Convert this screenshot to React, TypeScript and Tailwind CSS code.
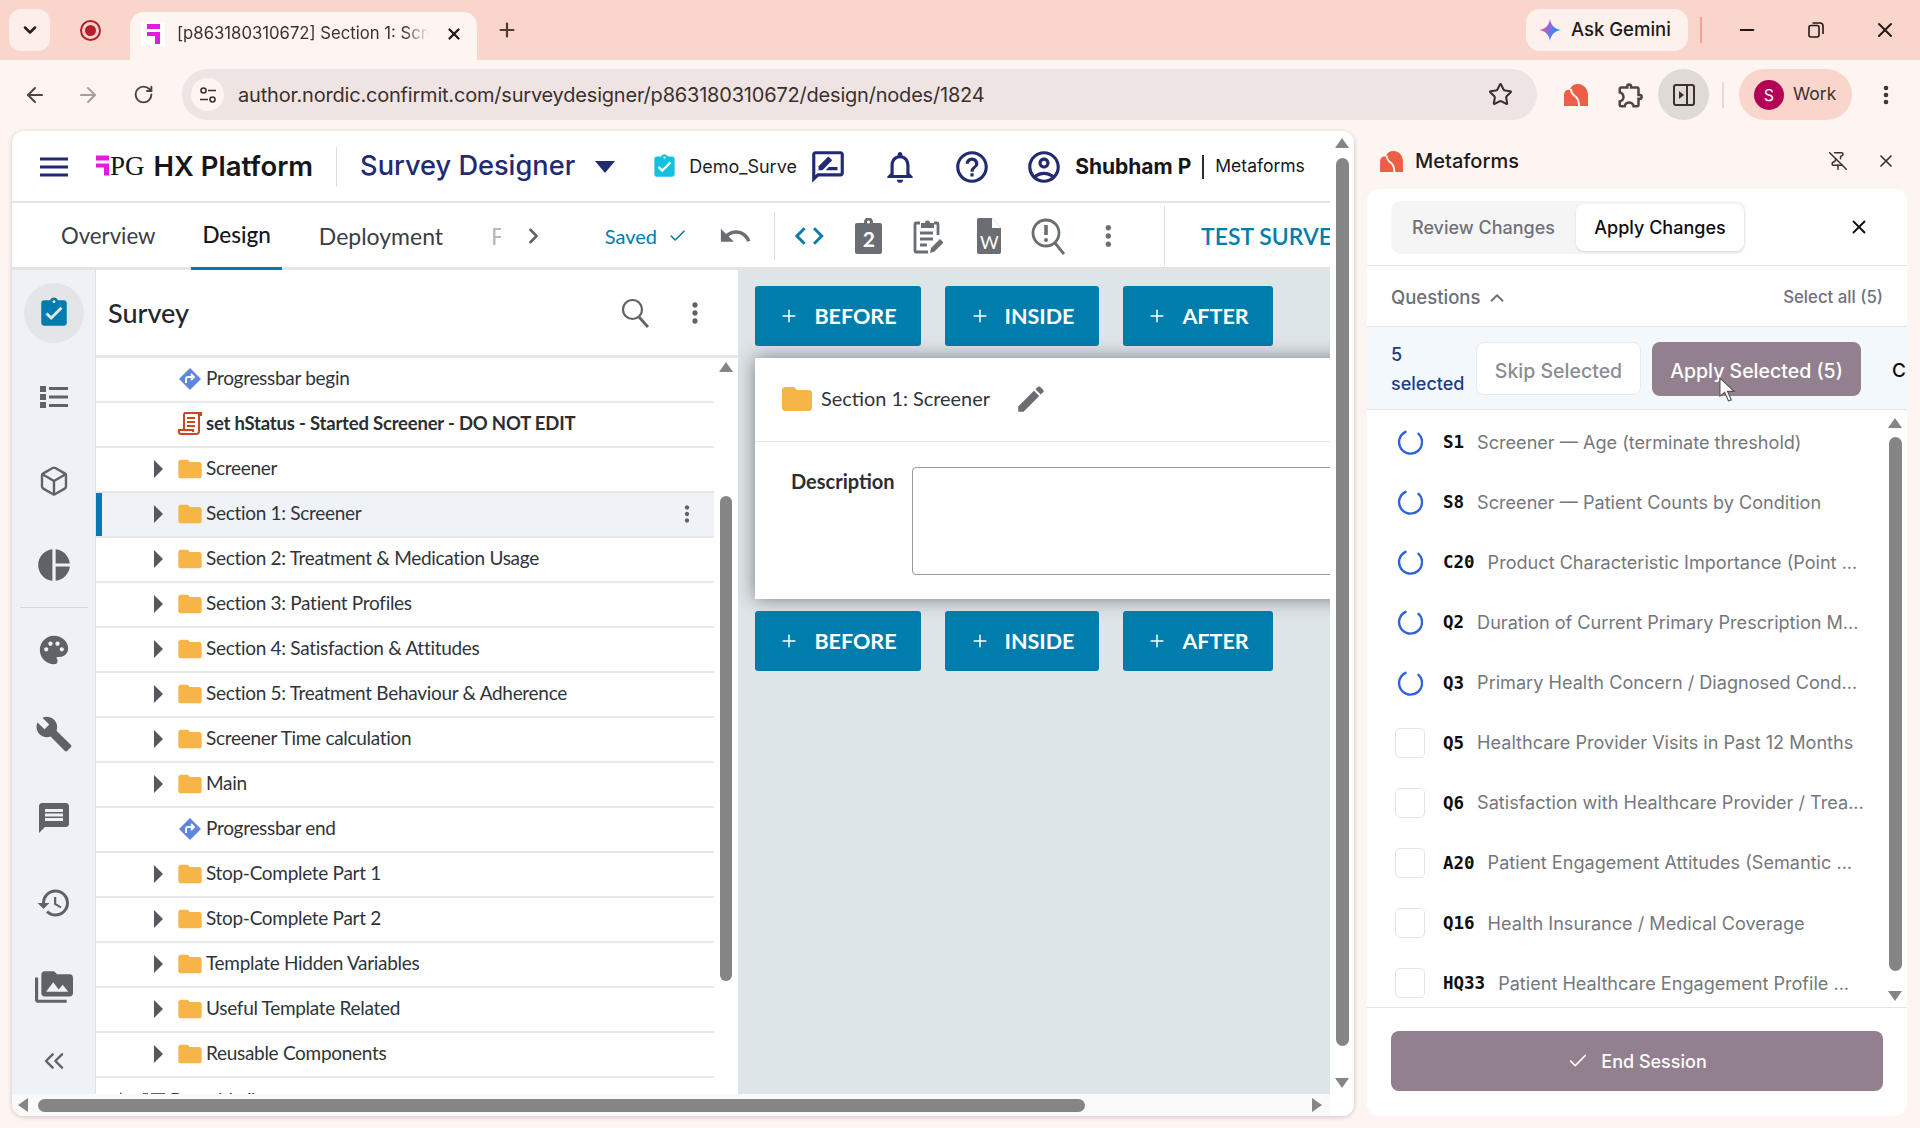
import React from "react";
import { ChevronDown, X, Plus, ArrowLeft, ArrowRight, RotateCw, Star, EllipsisVertical, ChevronUp, Check, ChevronRight, Minus, PinOff, Box, ChevronsLeft } from "lucide-react";
import { MdAssignmentTurnedIn, MdPieChart, MdPalette, MdBuild, MdMessage, MdHistory, MdPermMedia, MdFolder, MdEdit, MdMoreVert, MdUndo, MdCode, MdOutlineNotifications, MdHelpOutline, MdOutlineAccountCircle, MdOutlineRateReview, MdOutlineExtension } from "react-icons/md";

const sans = "font-['Lato','Liberation_Sans',sans-serif]";
const ui = "font-['Inter','Liberation_Sans',sans-serif]";

function PgMark({ className }: { className: string }) {
  return (
    <svg viewBox="0 0 13 20" className={className}>
      <rect x="0" y="0" width="13" height="5" fill="#e619df" />
      <path d="M0 8h13v12H8v-8H0z" fill="#e619df" />
    </svg>
  );
}

function MetaLogo({ className }: { className: string }) {
  return (
    <svg viewBox="0 0 24 22" className={className}>
      <path d="M0 22V11C0 7 3 5 6 6c1-4 4-6 8-6 6 0 10 5 10 11v11H0z" fill="#ee5d45" />
      <path d="M7 5c0 4 2 6 5 8 2 2 3 5 3 9" fill="none" stroke="#fdf5f2" strokeWidth="2" />
    </svg>
  );
}

function GeminiStar() {
  return (
    <svg viewBox="0 0 24 24" className="w-[22px] h-[24px]">
      <defs>
        <linearGradient id="gem" x1="0" y1="0.2" x2="1" y2="0.6">
          <stop offset="0" stopColor="#e8753c" />
          <stop offset="0.4" stopColor="#a55fd6" />
          <stop offset="0.75" stopColor="#2f8cf0" />
          <stop offset="1" stopColor="#1fb7a0" />
        </linearGradient>
      </defs>
      <path d="M12 0c1 7 5 11 12 12-7 1-11 5-12 12-1-7-5-11-12-12 7-1 11-5 12-12z" fill="url(#gem)" />
    </svg>
  );
}

function Tri({ dir, className }: { dir: "up" | "down" | "left" | "right"; className?: string }) {
  const d = { up: "M0 10L7 0l7 10z", down: "M0 0l7 10 7-10z", left: "M10 0L0 7l10 7z", right: "M0 0l10 7-10 7z" }[dir];
  const vb = dir === "up" || dir === "down" ? "0 0 14 10" : "0 0 10 14";
  const size = dir === "up" || dir === "down" ? "w-[14px] h-[10px]" : "w-[10px] h-[14px]";
  return (
    <svg viewBox={vb} className={`${size} ${className ?? ""}`}>
      <path d={d} fill="#858585" />
    </svg>
  );
}

function Diamond() {
  return (
    <svg viewBox="0 0 24 24" className="w-[24px] h-[24px] shrink-0">
      <path d="M12 1l11 11-11 11L1 12z" fill="#5d86e0" />
      <path d="M8 16v-4a2 2 0 012-2h5M13 7l3 3-3 3" fill="none" stroke="#fff" strokeWidth="2" />
    </svg>
  );
}

function ScriptIcon() {
  return (
    <svg viewBox="0 0 24 26" className="w-[24px] h-[26px] shrink-0">
      <path d="M6 2h15v18a3 3 0 01-3 3H3a2 2 0 01-2-2v-2h14v2M6 19V4a2 2 0 012-2M21 2h2v3" fill="none" stroke="#c9481f" strokeWidth="2" />
      <path d="M9 7h8M9 11h8M9 15h8" stroke="#c9481f" strokeWidth="2" />
    </svg>
  );
}

function ListIcon() {
  return (
    <svg viewBox="0 0 28 24" className="w-[28px] h-[24px]">
      <path d="M0 1h6v6H0zM0 9h6v6H0zM0 17h6v6H0z" fill="currentColor" />
      <path d="M9 2h19v3H9zM9 10.500h19v3H9zM9 19h19v3H9z" fill="currentColor" />
    </svg>
  );
}

function ClipNum() {
  return (
    <div className="relative w-[27px] h-[36px] flex items-center justify-center">
      <svg viewBox="0 0 27 36" className="w-[27px] h-[36px]">
        <path d="M2 5h7V4a4.500 4.500 0 019 0v1h7a2 2 0 012 2v27a2 2 0 01-2 2H2a2 2 0 01-2-2V7a2 2 0 012-2z" fill="#6a6e72" />
        <circle cx="13.500" cy="4" r="1.500" fill="#fff" />
      </svg>
      <span className={`absolute top-[8px] text-white text-[21px] font-bold leading-[26px] ${sans}`}>2</span>
    </div>
  );
}

function ReviewIcon() {
  return (
    <svg viewBox="0 0 30 36" className="w-[30px] h-[36px]">
      <path d="M7 5H3a1 1 0 00-1 1v27a1 1 0 001 1h12M21 5h3a1 1 0 011 1v11" fill="none" stroke="#6a6e72" strokeWidth="2.8" />
      <path d="M8 5h4a2.500 2.500 0 015 0h4v5H8z" fill="#6a6e72" />
      <path d="M7 15h13M7 21h13M7 27h7" stroke="#6a6e72" strokeWidth="2.8" />
      <path d="M17 35l1-5 9-9 3.500 3.500-9 9z" fill="#6a6e72" />
    </svg>
  );
}

function WordIcon() {
  return (
    <div className="relative w-[24px] h-[36px] flex justify-center">
      <svg viewBox="0 0 24 36" className="w-[24px] h-[36px]">
        <path d="M2 0h13l9 10v24a2 2 0 01-2 2H2a2 2 0 01-2-2V2a2 2 0 012-2z" fill="#6a6e72" />
        <path d="M15 0l9 10h-9z" fill="#fff" />
      </svg>
      <span className={`absolute top-[13px] text-white text-[18px] leading-[22px] ${sans}`}>W</span>
    </div>
  );
}

function SearchAlert() {
  return (
    <svg viewBox="0 0 34 38" className="w-[34px] h-[38px]">
      <circle cx="15" cy="16" r="13" fill="none" stroke="#6a6e72" strokeWidth="2.8" />
      <path d="M24 26l9 11" stroke="#6a6e72" strokeWidth="2.8" />
      <path d="M15 8v10" stroke="#6a6e72" strokeWidth="3.6" />
      <circle cx="15" cy="23" r="2" fill="#6a6e72" />
    </svg>
  );
}

function SearchThin() {
  return (
    <svg viewBox="0 0 28 30" className="w-[28px] h-[30px] ml-auto">
      <circle cx="11.500" cy="11.500" r="9.500" fill="none" stroke="#5f6368" strokeWidth="2.200" />
      <path d="M18 19l9 10" stroke="#5f6368" strokeWidth="2.800" />
    </svg>
  );
}

function Spinner() {
  return (
    <svg viewBox="0 0 26 26" className="w-[26px] h-[26px] -ml-[1px]">
      <path d="M8.500 2.800A11.500 11.500 0 1021.500 4.800" fill="none" stroke="#2f62d9" strokeWidth="2.400" strokeLinecap="round" />
    </svg>
  );
}

function ActionButtons() {
  const items = [
    ["BEFORE", "w-[166px]"],
    ["INSIDE", "w-[154px]"],
    ["AFTER", "w-[150px]"],
  ];
  return (
    <div className="flex gap-6">
      {items.map(([t, w]) => (
        <div key={t} className={`${w} h-[60px] bg-[#017dad] rounded-[3px] flex items-center justify-center gap-[15px] text-white text-[21.5px] font-bold ${sans}`}>
          <Plus size={20} strokeWidth={1.8} />
          <span>{t}</span>
        </div>
      ))}
    </div>
  );
}

function RowArrow() {
  return (
    <svg viewBox="0 0 9 18" className="w-[9px] h-[18px]">
      <path d="M0 0l9 9-9 9z" fill="#55595d" />
    </svg>
  );
}

type Row = { t: string; k: "folder" | "diamond" | "script"; bold?: boolean; sel?: boolean };
const rows: Row[] = [
  { t: "Progressbar begin", k: "diamond" },
  { t: "set hStatus - Started Screener - DO NOT EDIT", k: "script", bold: true },
  { t: "Screener", k: "folder" },
  { t: "Section 1: Screener", k: "folder", sel: true },
  { t: "Section 2: Treatment & Medication Usage", k: "folder" },
  { t: "Section 3: Patient Profiles", k: "folder" },
  { t: "Section 4: Satisfaction & Attitudes", k: "folder" },
  { t: "Section 5: Treatment Behaviour & Adherence", k: "folder" },
  { t: "Screener Time calculation", k: "folder" },
  { t: "Main", k: "folder" },
  { t: "Progressbar end", k: "diamond" },
  { t: "Stop-Complete Part 1", k: "folder" },
  { t: "Stop-Complete Part 2", k: "folder" },
  { t: "Template Hidden Variables", k: "folder" },
  { t: "Useful Template Related", k: "folder" },
  { t: "Reusable Components", k: "folder" },
];

function TreeRow({ r }: { r: Row }) {
  return (
    <div className={`h-[45px] pb-[2px] shrink-0 flex items-center border-b-2 border-[#e6e8ea] relative ${r.sel ? "bg-[#eff2f6]" : "bg-white"}`}>
      {r.sel && <div className="w-[6px] bg-[#017dad] absolute left-0 top-0 bottom-0" />}
      <div className="w-[82px] pl-[58px] shrink-0 flex items-center">
        {r.k === "folder" && <RowArrow />}
      </div>
      {r.k === "folder" && <MdFolder size={28} className="text-[#f7b549] shrink-0 -ml-[2px] -mr-[2px]" />}
      {r.k === "diamond" && <Diamond />}
      {r.k === "script" && <ScriptIcon />}
      <span className={`ml-[4px] whitespace-nowrap ${r.bold ? "text-[18.5px] tracking-[-0.2px] font-bold text-[#2b2e33]" : "text-[19px] tracking-[-0.3px] text-[#30343a]"} ${sans}`}>{r.t}</span>
      {r.sel && <MdMoreVert size={26} className="text-[#5f6368] ml-auto mr-[14px]" />}
    </div>
  );
}

const questions = [
  ["S1", "Screener — Age (terminate threshold)", 1],
  ["S8", "Screener — Patient Counts by Condition", 1],
  ["C20", "Product Characteristic Importance (Point ...", 1],
  ["Q2", "Duration of Current Primary Prescription M...", 1],
  ["Q3", "Primary Health Concern / Diagnosed Cond...", 1],
  ["Q5", "Healthcare Provider Visits in Past 12 Months", 0],
  ["Q6", "Satisfaction with Healthcare Provider / Trea...", 0],
  ["A20", "Patient Engagement Attitudes (Semantic ...", 0],
  ["Q16", "Health Insurance / Medical Coverage", 0],
  ["HQ33", "Patient Healthcare Engagement Profile ...", 0],
] as const;

const railIcons = [
  <ListIcon />,
  <Box size={32} strokeWidth={1.8} />,
  <MdPieChart size={38} />,
];
const railIcons2 = [
  <MdPalette size={34} />,
  <MdBuild size={38} />,
  <MdMessage size={36} />,
  <MdHistory size={36} />,
  <MdPermMedia size={38} />,
];

export default function App() {
  return (
    <div className={`w-[1920px] h-[1128px] overflow-hidden flex flex-col bg-[#fdf5f2] ${ui}`}>
      {/* Tab strip */}
      <div className="h-[60px] shrink-0 bg-[#fad5cb] flex items-center relative">
        <div className="ml-[9px] w-[41px] h-[42px] rounded-[12px] bg-[#fdeee9] flex items-center justify-center">
          <ChevronDown size={20} strokeWidth={3} className="text-[#2a1c18]" />
        </div>
        <div className="ml-[30px] w-[21px] h-[21px] rounded-full border-2 border-[#b3202b] flex items-center justify-center">
          <div className="w-[11px] h-[11px] rounded-full bg-[#b3202b]" />
        </div>
        <div className="ml-[29px] mt-[12px] h-[48px] w-[347px] bg-[#fdf5f2] rounded-t-[14px] flex items-center pl-[11px] pr-[14px] pb-[5px]">
          <div className="w-[24px] h-[24px] bg-white flex items-center justify-center shrink-0">
            <PgMark className="w-[13px] h-[20px]" />
          </div>
          <span className="ml-[12px] w-[252px] overflow-hidden whitespace-nowrap text-[16.7px] text-[#3c302c] [mask-image:linear-gradient(to_right,black_90%,transparent)]">[p863180310672] Section 1: Screener</span>
          <X size={18} strokeWidth={3} className="ml-auto text-[#231815]" />
        </div>
        <Plus size={22} strokeWidth={2.4} className="ml-[19px] text-[#4e3c37]" />
        <div className="ml-auto w-[162px] h-[42px] rounded-[14px] bg-[#fdf1ed] flex items-center pl-[13px] gap-[10px] text-[18.5px] font-medium text-[#1d1a19] whitespace-nowrap">
          <GeminiStar />
          <span>Ask Gemini</span>
        </div>
        <div className="ml-[12px] w-[2px] h-[26px] bg-[#f0a392]" />
        <div className="ml-[21px] w-[48px] flex justify-center"><Minus size={22} strokeWidth={2} className="text-[#231815]" /></div>
        <div className="ml-[21px] w-[48px] flex justify-center">
          <svg viewBox="0 0 16 16" className="w-[16px] h-[16px]"><rect x="1" y="3.500" width="10" height="11.500" rx="2" fill="none" stroke="#231815" strokeWidth="1.600" /><path d="M4.500 1h7.500a3 3 0 013 3v8" fill="none" stroke="#231815" strokeWidth="1.600" /></svg>
        </div>
        <div className="ml-[21px] mr-[11px] w-[48px] flex justify-center"><X size={24} strokeWidth={2} className="text-[#231815]" /></div>
      </div>

      {/* Toolbar */}
      <div className="h-[71px] shrink-0 flex items-center pb-[2px] pl-[23px]">
        <ArrowLeft size={24} strokeWidth={2} className="text-[#53433e]" />
        <ArrowRight size={24} strokeWidth={2} className="ml-[29px] text-[#a99d99]" />
        <RotateCw size={21} strokeWidth={2.2} className="ml-[33px] text-[#53433e]" />
        <div className="ml-[28px] w-[1355px] h-[51px] rounded-full bg-[#efe4e4] flex items-center pl-[9px] pr-[24px]">
          <div className="w-[33px] h-[33px] rounded-full bg-[#fdf5f2] flex items-center justify-center">
            <svg viewBox="0 0 18 18" className="w-[18px] h-[18px]"><circle cx="4.500" cy="4.500" r="2.500" fill="none" stroke="#3c302c" strokeWidth="1.600" /><circle cx="13.500" cy="13.500" r="2.500" fill="none" stroke="#3c302c" strokeWidth="1.600" /><path d="M9 4.500h8M1 13.500h8" stroke="#3c302c" strokeWidth="1.600" /></svg>
          </div>
          <span className="ml-[14px] text-[20px] text-[#3c302c] whitespace-nowrap tracking-[-0.2px]">author.nordic.confirmit.com/surveydesigner/p863180310672/design/nodes/1824</span>
          <Star size={25} strokeWidth={2} className="ml-auto text-[#3c302c]" />
        </div>
        <MetaLogo className="ml-[27px] w-[24px] h-[22px]" />
        <MdOutlineExtension size={30} className="ml-[28px] text-[#53433e]" />
        <div className="ml-[12px] w-[51px] h-[51px] rounded-full bg-[#e0dad7] flex items-center justify-center">
          <svg viewBox="0 0 22 22" className="w-[22px] h-[22px]"><rect x="1" y="1" width="20" height="20" rx="2" fill="none" stroke="#3c302c" strokeWidth="2" /><path d="M14 1v20" stroke="#3c302c" strokeWidth="2" /><path d="M6 7l5 4-5 4z" fill="#3c302c" /></svg>
        </div>
        <div className="ml-[13px] w-[2px] h-[26px] bg-[#f9d3c9]" />
        <div className="ml-[15px] w-[113px] h-[51px] rounded-full bg-[#fad5cb] flex items-center pl-[15px] gap-[9px]">
          <div className="w-[30px] h-[30px] rounded-full bg-[#b30056] flex items-center justify-center text-white text-[16px]">S</div>
          <span className="text-[17.5px] text-[#3c302c]">Work</span>
        </div>
        <EllipsisVertical size={24} strokeWidth={2.6} className="ml-[22px] text-[#3c302c]" />
      </div>

      {/* Content */}
      <div className="flex-1 min-h-0 flex pl-[12px] pr-[13px] pb-[12px]">
        {/* App window */}
        <div className="w-[1342px] shrink-0 rounded-[12px] bg-white shadow-[0_1px_5px_rgba(0,0,0,0.2)] overflow-hidden flex">
          <div className="w-[1318px] shrink-0 flex flex-col min-h-0">
            {/* Header */}
            <div className="h-[72px] pt-[1px] shrink-0 border-b-2 border-[#e2e4e6] flex items-center overflow-hidden">
              <svg viewBox="0 0 28 20" className="ml-[28px] w-[28px] h-[20px]"><path d="M0 2h28M0 10h28M0 18h28" stroke="#222a72" strokeWidth="3" /></svg>
              <PgMark className="ml-[28px] w-[13px] h-[21px] -mt-[2px]" />
              <span className="ml-[1px] text-[27px] font-['Liberation_Serif',serif] text-[#14161a] leading-none">PG</span>
              <span className="ml-[9px] text-[27.5px] font-semibold text-[#14161a] whitespace-nowrap">HX Platform</span>
              <div className="ml-[23px] w-px h-[40px] bg-[#dcdee0]" />
              <span className="ml-[23px] text-[27.2px] font-medium text-[#222a72] whitespace-nowrap">Survey Designer</span>
              <svg viewBox="0 0 20 12" className="ml-[20px] w-[20px] h-[12px]"><path d="M0 0h20L10 12z" fill="#222a72" /></svg>
              <MdAssignmentTurnedIn size={27} className="ml-[36px] text-[#13c0de]" />
              <span className="ml-[11px] w-[108px] shrink-0 overflow-hidden whitespace-nowrap text-[18px] text-[#1c1e21]">Demo_Survey</span>
              <MdOutlineRateReview size={38} className="ml-[12px] text-[#222a72]" />
              <MdOutlineNotifications size={38} className="ml-[34px] text-[#222a72]" />
              <MdHelpOutline size={38} className="ml-[34px] text-[#222a72]" />
              <MdOutlineAccountCircle size={38} className="ml-[34px] text-[#222a72]" />
              <span className="ml-[12px] text-[21px] font-bold text-[#14161a] whitespace-nowrap">Shubham P</span>
              <div className="ml-[11px] w-[2px] h-[24px] bg-[#2a2c30]" />
              <span className="ml-[11px] text-[17.5px] text-[#14161a]">Metaforms</span>
            </div>
            {/* Tabs row */}
            <div className={`h-[67px] pt-[2px] shrink-0 border-b-[3px] border-[#e2e4e6] flex items-center relative ${sans}`}>
              <span className="ml-[49px] w-[98px] text-[22.2px] text-[#3a3e44]">Overview</span>
              <div className="ml-[36px] w-[94px] h-full flex items-center justify-center border-b-[3px] border-[#017dad] translate-y-[3px]">
                <span className="text-[22.5px] text-[#14161a] font-medium -translate-y-[3px]">Design</span>
              </div>
              <span className="ml-[37px] text-[23px] text-[#3a3e44]">Deployment</span>
              <span className="ml-[48px] w-[10px] overflow-hidden text-[23px] text-[#b4b6b9]">F</span>
              <ChevronRight size={26} strokeWidth={2.4} className="ml-[20px] text-[#5f6368]" />
              <span className="ml-[59px] text-[20px] text-[#017dad]">Saved</span>
              <Check size={20} strokeWidth={2} className="ml-[11px] text-[#017dad]" />
              <MdUndo size={36} className="ml-[31px] text-[#6a6e72]" />
              <div className="ml-[21px] w-px h-[48px] bg-[#dcdee0]" />
              <MdCode size={36} className="ml-[17px] text-[#017dad]" />
              <div className="ml-[29px]"><ClipNum /></div>
              <div className="ml-[31px]"><ReviewIcon /></div>
              <div className="ml-[34px]"><WordIcon /></div>
              <div className="ml-[30px]"><SearchAlert /></div>
              <MdMoreVert size={34} className="ml-[27px] text-[#6a6e72]" />
              <div className="ml-[39px] w-px h-[60px] bg-[#dcdee0]" />
              <div className="ml-[36px] w-[129px] shrink-0 overflow-hidden text-[23px] font-semibold text-[#017dad] whitespace-nowrap">TEST SURVEY</div>
            </div>
            {/* Body */}
            <div className="flex-1 min-h-0 flex">
              {/* Rail */}
              <div className="w-[84px] shrink-0 bg-[#eef2f6] border-r border-[#dfe2e5] flex flex-col items-center text-[#5f6368] pt-[13px]">
                <div className="w-[60px] h-[60px] rounded-full bg-[#e3e5e8] flex items-center justify-center">
                  <MdAssignmentTurnedIn size={34} className="text-[#017dad]" />
                </div>
                <div className="mt-[12px] w-full flex flex-col items-center">
                  {railIcons.map((ic, i) => (
                    <div key={i} className="h-[84px] w-full flex items-center justify-center">{ic}</div>
                  ))}
                  <div className="w-[68px] h-px bg-[#d5d8db]" />
                  {railIcons2.map((ic, i) => (
                    <div key={i} className="h-[84.2px] w-full flex items-center justify-center">{ic}</div>
                  ))}
                </div>
                <ChevronsLeft size={32} strokeWidth={1.8} className="mt-[16px]" />
              </div>
              {/* Tree panel */}
              <div className="w-[642px] shrink-0 flex flex-col min-h-0">
                <div className="h-[88px] pt-[1px] shrink-0 border-b-[3px] border-[#e6e8ea] flex items-center pl-[12px]">
                  <span className={`text-[27px] font-medium text-[#24272b] ${sans}`}>Survey</span>
                  <SearchThin />
                  <MdMoreVert size={32} className="ml-[30px] mr-[27px] text-[#5f6368]" />
                </div>
                <div className="flex-1 min-h-0 flex">
                  <div className="w-[618px] shrink-0 overflow-hidden flex flex-col">
                    {rows.map((r) => <TreeRow key={r.t} r={r} />)}
                    <div className="h-[45px] shrink-0 flex items-center pl-[24px]">
                      <RowArrow />
                      <svg viewBox="0 0 22 20" className="ml-[14px] w-[22px] h-[20px]"><path d="M0 2h5v4H0zM8 2h14v3H8zM0 9h5v4H0zM8 10h14v3H8z" fill="#5f6368" /></svg>
                      <span className={`ml-[5px] text-[19px] tracking-[-0.3px] text-[#30343a] whitespace-nowrap ${sans}`}>Reusable lists</span>
                    </div>
                  </div>
                  <div className="w-[24px] shrink-0 flex flex-col items-center pr-[1px] pt-[4px]">
                    <Tri dir="up" />
                    <div className="mt-[124px] w-[12px] h-[485px] rounded-full bg-[#858585]" />
                  </div>
                </div>
              </div>
              {/* Detail */}
              <div className="flex-1 min-w-0 overflow-hidden bg-[#dee5e8] pl-[17px] pt-[16px] flex flex-col">
                <ActionButtons />
                <div className="mt-[12px] w-[640px] h-[241px] shrink-0 bg-white shadow-[0_0_18px_rgba(0,0,0,0.45)] flex flex-col">
                  <div className="h-[84px] pb-[1px] shrink-0 border-b border-[#e3e5e7] flex items-center pl-[27px]">
                    <MdFolder size={36} className="text-[#f7b549] -ml-[3px]" />
                    <span className={`ml-[6px] text-[19.9px] text-[#30343a] whitespace-nowrap ${sans}`}>Section 1: Screener</span>
                    <MdEdit size={34} className="ml-[24px] text-[#6a6e72]" />
                  </div>
                  <div className="flex pt-[25px] pl-[36px]">
                    <span className={`w-[121px] shrink-0 mt-[-1px] text-[20px] font-bold text-[#2b2e33] ${sans}`}>Description</span>
                    <div className="w-[600px] shrink-0 h-[108px] border border-[#9a9a9a] rounded-[4px]" />
                  </div>
                </div>
                <div className="mt-[12px]"><ActionButtons /></div>
              </div>
            </div>
            {/* Horizontal scrollbar */}
            <div className="h-[22px] shrink-0 bg-[#f9f9f9] flex items-center pl-[6px]">
              <Tri dir="left" />
              <div className="ml-[10px] w-[1047px] h-[13px] rounded-full bg-[#858585]" />
              <Tri dir="right" className="ml-[227px]" />
            </div>
          </div>
          {/* Vertical scrollbar */}
          <div className="w-[24px] shrink-0 flex flex-col items-center pt-[7px] bg-white">
            <Tri dir="up" />
            <div className="mt-[10px] w-[13px] h-[888px] rounded-full bg-[#858585]" />
            <Tri dir="down" className="mt-[32px]" />
          </div>
        </div>

        {/* Side panel */}
        <div className="ml-[13px] flex-1 min-w-0 flex flex-col">
          <div className="h-[58px] pt-[2px] shrink-0 flex items-center pl-[13px]">
            <MetaLogo className="w-[23px] h-[21px]" />
            <span className="ml-[12px] text-[20px] font-medium text-[#1d1a19]">Metaforms</span>
            <PinOff size={20} strokeWidth={1.8} className="ml-auto text-[#3c302c]" />
            <X size={20} strokeWidth={2} className="ml-[28px] mr-[11px] text-[#3c302c]" />
          </div>
          <div className="flex-1 min-h-0 bg-white rounded-[12px] flex flex-col overflow-hidden">
            <div className="h-[77px] shrink-0 border-b border-[#e3e5e8] flex items-center pl-[24px]">
              <div className="w-[355px] h-[53px] rounded-[10px] bg-[#f5f5f5] flex items-center justify-end pr-[2px]">
                <span className="mr-[21px] text-[18px] font-medium text-[#71717a] whitespace-nowrap">Review Changes</span>
                <div className="w-[168px] h-[47px] rounded-[8px] bg-white shadow-sm flex items-center justify-center text-[18px] font-medium text-[#0d0d10] whitespace-nowrap">Apply Changes</div>
              </div>
              <X size={22} strokeWidth={2} className="ml-[102px] text-[#0d0d10]" />
            </div>
            <div className="h-[61px] pt-[4px] shrink-0 border-b border-[#e3e5e8] flex items-center px-[24px]">
              <span className="text-[18.5px] font-medium text-[#6b6f76]">Questions</span>
              <ChevronUp size={22} strokeWidth={2} className="ml-[6px] text-[#6b6f76]" />
              <span className="ml-auto text-[16.8px] font-medium text-[#71717a]">Select all (5)</span>
            </div>
            <div className="h-[83px] pt-[1px] shrink-0 bg-[#f2f8fc] border-b border-[#e3e5e8] flex items-center pl-[24px] overflow-hidden relative">
              <div className="w-[72px] shrink-0 text-[18px] leading-[29px] font-medium text-[#1e3a8a]">5<br />selected</div>
              <div className="ml-[13px] pt-[6px] w-[165px] shrink-0 h-[53px] rounded-[8px] bg-white border border-[#e8eaed] flex items-center justify-center text-[19.5px] font-medium text-[#8a8d93] whitespace-nowrap">Skip Selected</div>
              <div className="ml-[11px] pt-[6px] w-[209px] h-[54px] rounded-[8px] bg-[#93808f] flex items-center justify-center text-[19.5px] font-medium text-white whitespace-nowrap shrink-0">Apply Selected (5)</div>
              <span className="ml-[31px] pt-[6px] text-[19px] font-medium text-[#0d0d10] whitespace-nowrap">Clear</span>
              <svg viewBox="0 0 18 26" className="absolute left-[352px] top-[50px] w-[17px] h-[25px]"><path d="M1 1v19l5-4 4 9 3-1-4-9h7z" fill="#fff" stroke="#555" strokeWidth="1.200" /></svg>
            </div>
            <div className="flex-1 min-h-0 flex">
              <div className="flex-1 min-w-0 overflow-hidden pl-[28px] pt-[2px]">
                {questions.map(([code, t, spin]) => (
                  <div key={code} className="h-[60.15px] flex items-center">
                    <div className="w-[30px] h-[30px] shrink-0 flex items-center justify-center">
                      {spin ? <Spinner /> : <div className="w-[30px] h-[30px] rounded-[5px] border border-[#e3e5e8]" />}
                    </div>
                    <span className="ml-[18px] text-[17.5px] font-bold text-[#0d0d10] font-['DejaVu_Sans_Mono',monospace]">{code}</span>
                    <span className="ml-[13px] text-[18.1px] text-[#75777c] whitespace-nowrap">{t}</span>
                  </div>
                ))}
              </div>
              <div className="w-[18px] shrink-0 mr-[3px] flex flex-col items-center pt-[8px]">
                <Tri dir="up" />
                <div className="mt-[9px] w-[13px] h-[534px] rounded-full bg-[#858585]" />
                <Tri dir="down" className="mt-[20px]" />
              </div>
            </div>
            <div className="h-[109px] shrink-0 border-t border-[#e3e5e8] px-[24px] pt-[23px]">
              <div className="h-[60px] rounded-[8px] bg-[#93808f] flex items-center justify-center gap-[12px] text-white text-[18px] font-medium">
                <Check size={22} strokeWidth={1.8} />
                <span>End Session</span>
              </div>
            </div>
          </div>
        </div>
      </div>
    </div>
  );
}
